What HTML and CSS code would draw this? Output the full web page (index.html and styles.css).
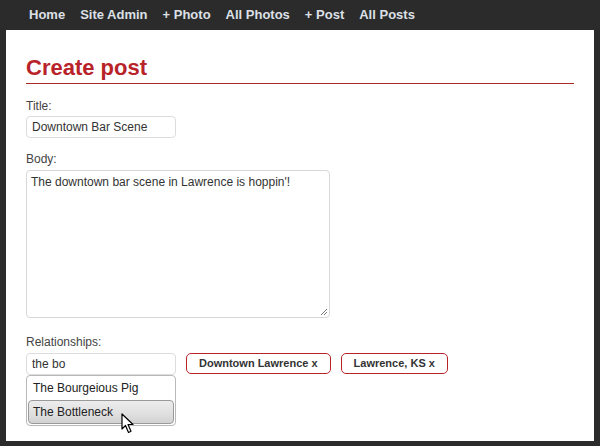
FILE: index.html
```html
<!DOCTYPE html>
<html>
<head>
<meta charset="utf-8">
<link rel="stylesheet" href="styles.css">
</head>
<body>
<nav class="nav">
  <a class="nav-link">Home</a>
  <a class="nav-link">Site Admin</a>
  <a class="nav-link">+ Photo</a>
  <a class="nav-link">All Photos</a>
  <a class="nav-link">+ Post</a>
  <a class="nav-link">All Posts</a>
</nav>
<main class="panel">
  <h1 class="title">Create post</h1>
  <div class="field">
    <label class="label">Title:</label>
    <div class="input short">Downtown Bar Scene</div>
  </div>
  <div class="field">
    <label class="label">Body:</label>
    <div class="textarea">The downtown bar scene in Lawrence is hoppin'!
      <svg class="grip" width="8" height="8" viewBox="0 0 8 8"><path d="M7 1 L1 7 M7 4 L4 7" stroke="#777" stroke-width="1"/></svg>
    </div>
  </div>
  <div class="field rel">
    <label class="label">Relationships:</label>
    <div class="rel-row">
      <div class="ac">
        <div class="input short">the bo</div>
        <ul class="menu">
          <li class="item">The Bourgeious Pig</li>
          <li class="item active">The Bottleneck</li>
        </ul>
      </div>
      <span class="tag">Downtown Lawrence x</span>
      <span class="tag">Lawrence, KS x</span>
    </div>
    <svg class="cursor" width="14" height="21" viewBox="0 0 14 21"><path d="M1 1 L1 16 L4.5 12.5 L7.5 19.5 L10 18.3 L7 11.5 L12 11.5 Z" fill="#fff" stroke="#000" stroke-width="1.2" stroke-linejoin="round"/></svg>
  </div>
</main>
</body>
</html>
```
FILE: styles.css
```css
html, body {
  margin: 0;
  padding: 0;
}
body {
  background: #2b2b2b;
  font-family: "Liberation Sans", Arial, sans-serif;
  width: 600px;
  height: 446px;
  overflow: hidden;
}
.nav {
  height: 30px;
  display: flex;
  align-items: center;
  gap: 15px;
  padding-left: 29px;
}
.nav-link {
  color: #dde0e6;
  font-weight: bold;
  font-size: 13px;
  line-height: 30px;
}
.panel {
  margin: 0 6px;
  background: #fff;
  height: 411px;
  box-sizing: border-box;
  padding: 25px 20px 0 20px;
  color: #333;
  font-size: 12px;
}
.title {
  margin: 0;
  font-size: 22px;
  line-height: 26px;
  font-weight: bold;
  color: #b8232a;
  padding-bottom: 2px;
  border-bottom: 1px solid #a92a2a;
}
.field {
  display: flex;
  flex-direction: column;
  align-items: flex-start;
}
.field:nth-of-type(1) { margin-top: 15px; }
.field + .field { margin-top: 14px; }
.field.rel { margin-top: 17px; position: relative; }
.label {
  display: block;
  line-height: 14px;
  color: #444;
  margin-bottom: 3px;
}
.input {
  box-sizing: border-box;
  height: 22px;
  border: 1px solid #dcdcdc;
  border-radius: 4px;
  padding: 0 5px;
  line-height: 20px;
  color: #333;
}
.short { width: 150px; }
.textarea {
  position: relative;
  box-sizing: border-box;
  width: 304px;
  height: 148px;
  margin-top: 1px;
  border: 1px solid #d8d8d8;
  border-radius: 4px;
  padding: 3px 4px;
  line-height: 16px;
  color: #333;
}
.grip {
  position: absolute;
  right: 1px;
  bottom: 1px;
}
.rel-row {
  display: flex;
  align-items: flex-start;
  gap: 10px;
  margin-top: 1px;
}
.ac {
  display: flex;
  flex-direction: column;
}
.menu {
  list-style: none;
  margin: 0;
  padding: 1px;
  width: 150px;
  box-sizing: border-box;
  border: 1px solid #b9b9b9;
  border-radius: 4px;
  background: #fff;
}
.item {
  box-sizing: border-box;
  height: 23px;
  line-height: 21px;
  padding: 0 4px;
  color: #222;
  border: 1px solid transparent;
  border-radius: 4px;
}
.item.active {
  height: 24px;
  line-height: 22px;
  border-color: #9a9a9a;
  background: linear-gradient(#ececec, #e2e2e2 50%, #d2d2d2);
}
.tag {
  box-sizing: border-box;
  height: 21px;
  line-height: 19px;
  padding: 0 12px;
  border: 1px solid #b8232a;
  border-radius: 5px;
  font-weight: bold;
  font-size: 11px;
  color: #333;
}
.cursor {
  position: absolute;
  left: 95px;
  top: 78px;
}
```
